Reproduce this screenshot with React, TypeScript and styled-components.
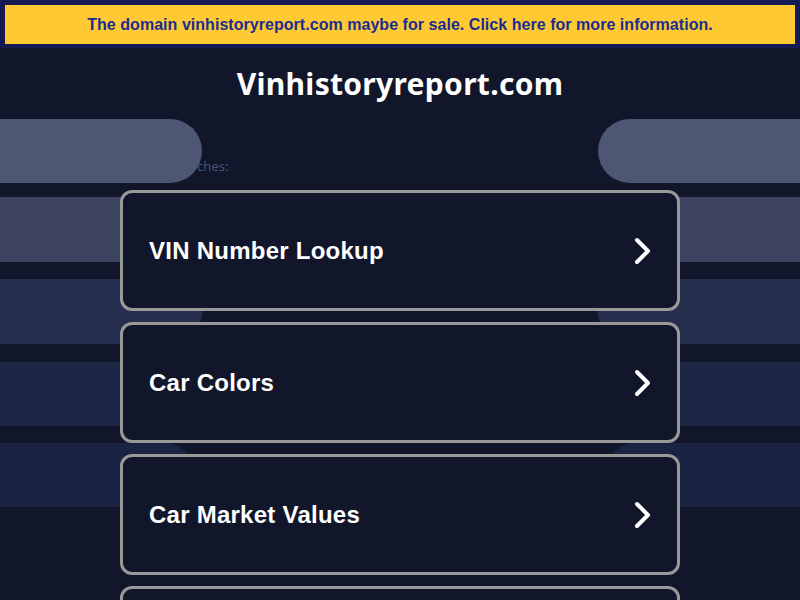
import React from 'react';
import styled, { createGlobalStyle } from 'styled-components';

const GlobalStyle = createGlobalStyle`
  html, body {
    margin: 0;
    padding: 0;
    background-color: #11162b;
  }
  body {
    font-family: "Liberation Sans", Arial, sans-serif;
    overflow: hidden;
  }
`;

const Page = styled.div`
  width: 800px;
  height: 600px;
  overflow: hidden;
  background-color: #11162b;
`;

const BannerStrip = styled.div`
  background-color: #151a52;
  padding: 5px 5px 4px;
`;

const Banner = styled.a`
  display: flex;
  align-items: center;
  justify-content: center;
  height: 39px;
  background-color: #ffc933;
  color: #1a2d90;
  font-weight: bold;
  font-size: 16px;
  letter-spacing: 0.04px;
  text-decoration: none;
`;

const Title = styled.h1`
  margin: 0;
  height: 70px;
  display: flex;
  align-items: center;
  justify-content: center;
  color: #ffffff;
  font-family: "Noto Sans", sans-serif;
  font-weight: 700;
  font-size: 30px;
  letter-spacing: 0.3px;
`;

const Stage = styled.div`
  position: relative;
`;

// skeleton bars sitting behind the cards
const Decor = styled.div`
  position: absolute;
  inset: 0;
  z-index: 1;
  padding-top: 1px;
  display: flex;
  flex-direction: column;
  pointer-events: none;
`;

const DecorRow = styled.div<{ $height: number; $after: number }>`
  display: flex;
  justify-content: space-between;
  flex-shrink: 0;
  height: ${(p) => p.$height}px;
  margin-bottom: ${(p) => p.$after}px;
`;

const Pill = styled.div<{ $color: string; $side: 'left' | 'right'; $width: number }>`
  width: ${(p) => p.$width}px;
  background-color: ${(p) => p.$color};
  border-radius: ${(p) => (p.$side === 'left' ? '0 32px 32px 0' : '32px 0 0 32px')};
`;

const Band = styled.div<{ $color: string }>`
  flex: 1;
  background-color: ${(p) => p.$color};
`;

const Content = styled.div`
  position: relative;
  width: 560px;
  margin: 0 auto;
`;

const Related = styled.div`
  position: relative;
  z-index: 0;
  height: 72px;
  display: flex;
  align-items: center;
  padding-top: 23px;
  box-sizing: border-box;
  color: #4e5775;
  font-family: "Open Sans", sans-serif;
  font-size: 13px;
  letter-spacing: 0.15px;
`;

const List = styled.div`
  position: relative;
  z-index: 2;
  display: flex;
  flex-direction: column;
  gap: 11px;
`;

const Card = styled.a`
  display: flex;
  align-items: center;
  justify-content: space-between;
  height: 121px;
  box-sizing: border-box;
  padding: 0 23px 0 26px;
  border: 3px solid #999999;
  border-radius: 12px;
  background-color: #11162b;
  color: #ffffff;
  font-weight: bold;
  font-size: 24px;
  letter-spacing: 0.25px;
  text-decoration: none;
`;

const Chevron = () => (
  <svg width="22" height="30" viewBox="0 0 22 30" fill="none">
    <polyline
      points="5,4 16,15 5,26"
      stroke="#ffffff"
      strokeWidth="4"
      strokeLinecap="round"
      strokeLinejoin="round"
    />
  </svg>
);

const items = ['VIN Number Lookup', 'Car Colors', 'Car Market Values', 'Car History Report'];

const App = () => {
  return (
    <Page>
      <GlobalStyle />
      <BannerStrip>
        <Banner href="#">
          The domain vinhistoryreport.com maybe for sale. Click here for more information.
        </Banner>
      </BannerStrip>
      <Title>Vinhistoryreport.com</Title>
      <Stage>
        <Decor>
          <DecorRow $height={64} $after={14}>
            <Pill $side="left" $width={202} $color="#4d5774" />
            <Pill $side="right" $width={202} $color="#4d5774" />
          </DecorRow>
          <DecorRow $height={65} $after={17}>
            <Band $color="#3b4361" />
          </DecorRow>
          <DecorRow $height={65} $after={18}>
            <Pill $side="left" $width={202} $color="#272f4f" />
            <Pill $side="right" $width={202} $color="#272f4f" />
          </DecorRow>
          <DecorRow $height={64} $after={17}>
            <Band $color="#1e2646" />
          </DecorRow>
          <DecorRow $height={64} $after={0}>
            <Pill $side="left" $width={196} $color="#1b2343" />
            <Pill $side="right" $width={196} $color="#1b2343" />
          </DecorRow>
        </Decor>
        <Content>
          <Related>Related searches:</Related>
          <List>
            {items.map((label) => (
              <Card href="#" key={label}>
                <span>{label}</span>
                <Chevron />
              </Card>
            ))}
          </List>
        </Content>
      </Stage>
    </Page>
  );
};

export default App;
